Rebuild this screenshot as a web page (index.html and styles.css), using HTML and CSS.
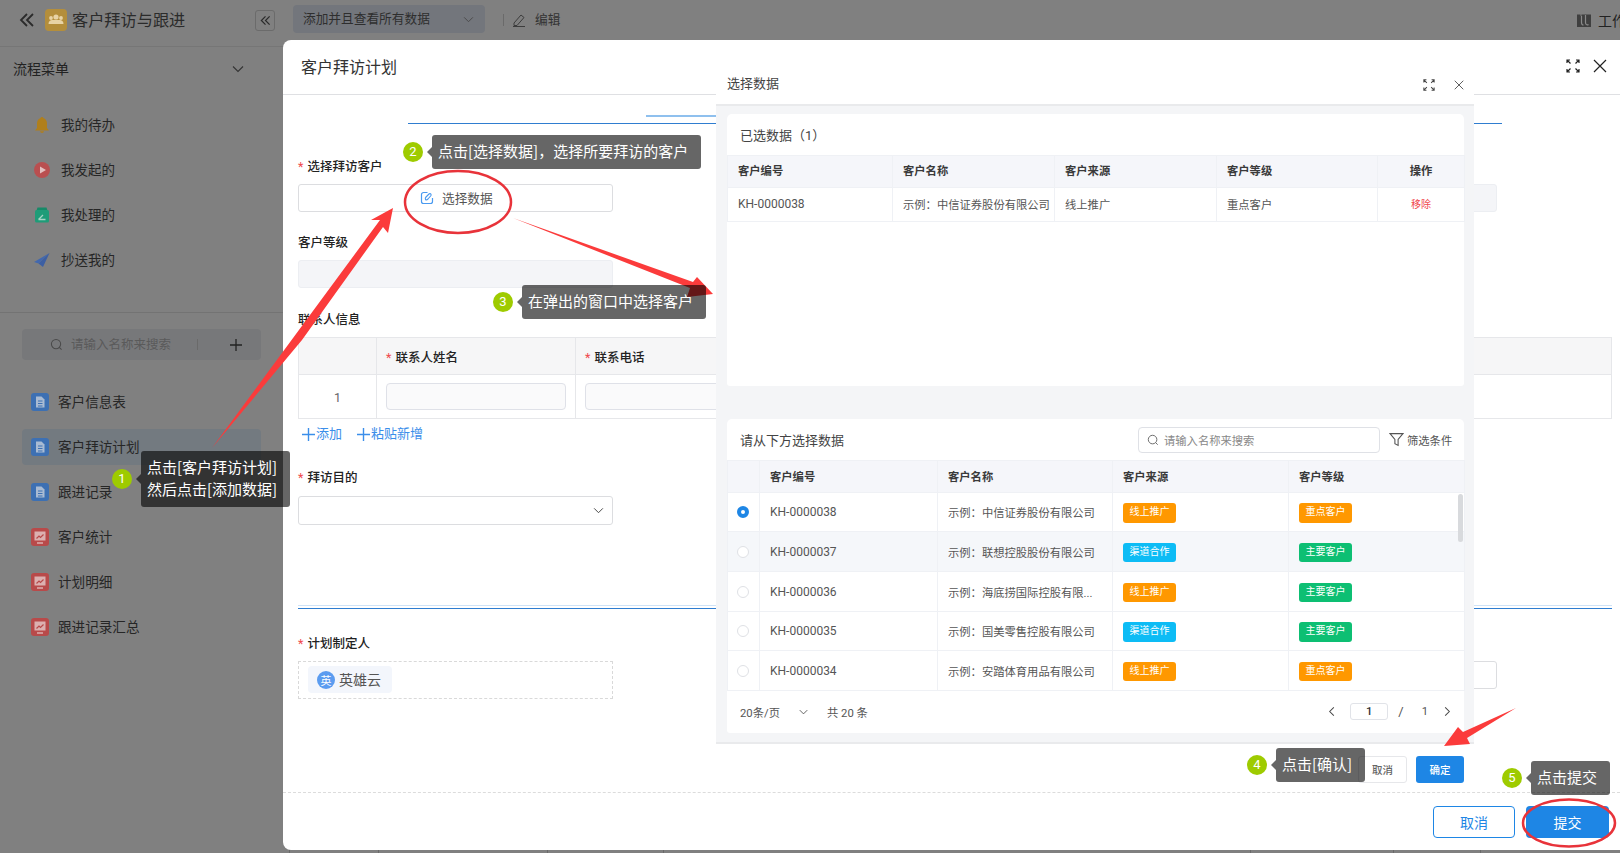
FILE: index.html
```html
<!DOCTYPE html>
<html lang="zh-CN">
<head>
<meta charset="utf-8">
<title>客户拜访计划</title>
<link rel="stylesheet" href="styles.css">
</head>
<body>
<svg class="defs" width="0" height="0" aria-hidden="true">
  <symbol id="i-doc" viewBox="0 0 18 18"><rect width="18" height="18" rx="3" fill="#3d70b3"/><path d="M5 3.500h5.500L13.500 6.500v8H5z" fill="#a9bbd3"/><path d="M7 8h4.500M7 10.500h4.500M7 13h4.500" stroke="#3d70b3" stroke-width="1"/></symbol>
  <symbol id="i-chart" viewBox="0 0 18 18"><rect width="18" height="18" rx="3" fill="#b84a4a"/><path d="M3.500 3.500h11v9h-11z" fill="#dcb0b0"/><path d="M6 15h6" stroke="#dcb0b0" stroke-width="1.500"/><path d="M5.500 10.500l2.500-2.500 1.500 1.500 3-3" fill="none" stroke="#b84a4a" stroke-width="1.200"/></symbol>
  <symbol id="i-expand" viewBox="0 0 14 14"><g fill="none" stroke="currentColor" stroke-width="1.200"><path d="M1 4V1h3M1 1l3.500 3.500M10 1h3v3M13 1L9.500 4.500M1 10v3h3M1 13l3.500-3.500M10 13h3v-3M13 13L9.500 9.500"/></g></symbol>
  <symbol id="i-close" viewBox="0 0 14 14"><path d="M1 1l12 12M13 1L1 13" fill="none" stroke="currentColor" stroke-width="1.200"/></symbol>
  <symbol id="i-down" viewBox="0 0 12 8"><path d="M1 1.500l5 5 5-5" fill="none" stroke="currentColor" stroke-width="1.100"/></symbol>
  <symbol id="i-search" viewBox="0 0 14 14"><circle cx="6.500" cy="6.500" r="5" fill="none" stroke="currentColor" stroke-width="1.100"/><path d="M10 10l2.500 2.500" stroke="currentColor" stroke-width="1.100"/></symbol>
  <symbol id="i-dbl" viewBox="0 0 16 16"><path d="M8 2L2 8l6 6M14 2L8 8l6 6" fill="none" stroke="currentColor" stroke-width="1.800"/></symbol>
  <symbol id="i-plus" viewBox="0 0 14 14"><path d="M7 0v14M0 7h14" fill="none" stroke="currentColor" stroke-width="1.500"/></symbol>
</svg>

<div class="app">
  <header class="topbar">
    <div class="brand">
      <svg class="back"><use href="#i-dbl"/></svg>
      <span class="logo"><svg viewBox="0 0 22 22" width="22" height="22"><circle cx="11" cy="8" r="2.600" fill="#e8d3a5"/><circle cx="6" cy="9" r="1.900" fill="#e8d3a5"/><circle cx="16" cy="9" r="1.900" fill="#e8d3a5"/><path d="M3.500 15c0-3 2-4 3.500-4h8c1.500 0 3.500 1 3.500 4z" fill="#e8d3a5"/></svg></span>
      <span class="app-title">客户拜访与跟进</span>
      <span class="collapse"><svg><use href="#i-dbl"/></svg></span>
    </div>
    <div class="view-select"><span>添加并且查看所有数据</span><svg class="chev"><use href="#i-down"/></svg></div>
    <span class="bar-sep"></span>
    <svg class="pencil" viewBox="0 0 14 14"><path d="M2 10l7-8 3 2.500-7 8H2zM1 13.500h12" fill="none" stroke="#3c3c3c" stroke-width="1"/></svg>
    <span class="bar-edit">编辑</span>
    <div class="bar-right">
      <svg class="puzzle" viewBox="0 0 14 14"><path d="M0 1.500h3.500v1.500h1V1.500H14V14H0z" fill="#3f3f3f"/><path d="M4.500 3v6.500c0 2 1 2.500 2 2.500M8.500 2v7.500c0 2 1.500 3 3 2" fill="none" stroke="#8a8a8a" stroke-width="1.200"/></svg>
      <span>工作</span>
    </div>
  </header>

  <aside class="side">
    <div class="menu-head"><span>流程菜单</span><svg class="chev"><use href="#i-down"/></svg></div>
    <nav class="flow-nav">
      <div class="flow-item"><svg viewBox="0 0 16 16"><path d="M8 0c.7 0 1.200.4 1.300 1 2.300.6 3.700 2.700 3.700 5.300V11l2 2.500H1L3 11V6.300C3 3.700 4.400 1.600 6.700 1 6.800.4 7.300 0 8 0z" fill="#b07f1c"/><path d="M6 14.300h4c-.2 1-1 1.700-2 1.700s-1.800-.7-2-1.700z" fill="#b07f1c"/></svg><span>我的待办</span></div>
      <div class="flow-item"><svg viewBox="0 0 16 16"><circle cx="8" cy="8" r="8" fill="#b94f50"/><path d="M6 4.500v7L12 8z" fill="#e3c0c0"/></svg><span>我发起的</span></div>
      <div class="flow-item"><svg viewBox="0 0 16 16"><path d="M3.500 0.500h9l1 3h-11z" fill="#178a68"/><rect x="1" y="3" width="14" height="12.500" rx="1.500" fill="#1f9c78"/><path d="M4.500 12.500L9 8M4.500 12.500h7" fill="none" stroke="#a8d4c6" stroke-width="1.300"/></svg><span>我处理的</span></div>
      <div class="flow-item"><svg viewBox="0 0 16 16"><path d="M15.500 1L0 10l4.500 1.500z" fill="#4268ae"/><path d="M15.500 1L4.500 11.500 9 15z" fill="#3c5fa3"/></svg><span>抄送我的</span></div>
    </nav>
    <div class="side-rule"></div>
    <div class="side-search">
      <svg class="s-ic"><use href="#i-search"/></svg>
      <span class="s-ph">请输入名称来搜索</span>
      <span class="s-sep"></span>
      <svg class="s-plus"><use href="#i-plus"/></svg>
    </div>
    <ul class="form-list">
      <li><svg><use href="#i-doc"/></svg><span>客户信息表</span></li>
      <li class="on"><svg><use href="#i-doc"/></svg><span>客户拜访计划</span></li>
      <li><svg><use href="#i-doc"/></svg><span>跟进记录</span></li>
      <li><svg><use href="#i-chart"/></svg><span>客户统计</span></li>
      <li><svg><use href="#i-chart"/></svg><span>计划明细</span></li>
      <li><svg><use href="#i-chart"/></svg><span>跟进记录汇总</span></li>
    </ul>
  </aside>

  <div class="peek"><i></i><i></i><i></i><i></i><i></i><i></i><i></i></div>

  <section class="modal">
    <div class="modal-head">
      <h2>客户拜访计划</h2>
      <svg class="m-exp"><use href="#i-expand"/></svg>
      <svg class="m-close"><use href="#i-close"/></svg>
    </div>
    <div class="modal-body">
      <div class="tab-line"><span class="tab-ink"></span></div>
      <div class="two-col first">
        <div class="field">
          <label><b>*</b>选择拜访客户</label>
          <div class="pick"><svg viewBox="0 0 14 14"><path d="M7.500 1.500H3.500a2 2 0 0 0-2 2v7a2 2 0 0 0 2 2h7a2 2 0 0 0 2-2V7" fill="none" stroke="#4a9af0" stroke-width="1.200"/><path d="M5.500 8.500c-.5-1 0-2 .5-2.500l3-3c1-1 2.500 0 2 1.500L8 8c-1 1-2 1-2.500.5z" fill="none" stroke="#4a9af0" stroke-width="1.100"/></svg><span>选择数据</span></div>
        </div>
        <div class="field"><label></label><div class="ctl disabled"></div></div>
      </div>
      <div class="field second">
        <label>客户等级</label>
        <div class="ctl disabled half"></div>
      </div>
      <div class="sub-title">联系人信息</div>
      <table class="contacts">
        <colgroup><col class="c-no"><col class="c-name"><col class="c-phone"></colgroup>
        <thead><tr><th></th><th><b>*</b>联系人姓名</th><th><b>*</b>联系电话</th></tr></thead>
        <tbody><tr><td class="no">1</td><td><span class="cell-in"></span></td><td><span class="cell-in short"></span></td></tr></tbody>
      </table>
      <div class="adders">
        <span><svg><use href="#i-plus"/></svg>添加</span>
        <span><svg><use href="#i-plus"/></svg>粘贴新增</span>
      </div>
      <div class="field third">
        <label><b>*</b>拜访目的</label>
        <div class="ctl half sel"><svg class="chev"><use href="#i-down"/></svg></div>
      </div>
      <div class="rule-blue"></div>
      <div class="two-col fourth">
        <div class="field">
          <label><b>*</b>计划制定人</label>
          <div class="members"><span class="chip"><i>英</i><span>英雄云</span></span></div>
        </div>
        <div class="field"><label></label><div class="ctl"></div></div>
      </div>
    </div>
    <div class="modal-foot">
      <button class="btn ghost">取消</button>
      <button class="btn solid">提交</button>
    </div>
  </section>

  <section class="inner">
    <div class="inner-head">
      <h3>选择数据</h3>
      <svg class="i-exp"><use href="#i-expand"/></svg>
      <svg class="i-close"><use href="#i-close"/></svg>
    </div>
    <div class="inner-body">
      <div class="card selected">
        <div class="card-head"><span>已选数据（1）</span></div>
        <table class="grid">
          <colgroup><col class="a1"><col class="a2"><col class="a3"><col class="a4"><col class="a5"></colgroup>
          <thead><tr><th>客户编号</th><th>客户名称</th><th>客户来源</th><th>客户等级</th><th class="mid">操作</th></tr></thead>
          <tbody><tr><td class="code">KH-0000038</td><td>示例：中信证券股份有限公司</td><td>线上推广</td><td>重点客户</td><td class="mid del">移除</td></tr></tbody>
        </table>
      </div>
      <div class="card picker">
        <div class="card-head">
          <span>请从下方选择数据</span>
          <div class="search"><svg><use href="#i-search"/></svg><span>请输入名称来搜索</span></div>
          <div class="filter"><svg viewBox="0 0 14 14"><path d="M1 1.500h12L8.500 7v5.500l-3-1.500V7z" fill="none" stroke="#555" stroke-width="1"/></svg><span>筛选条件</span></div>
        </div>
        <div class="grid-wrap">
          <table class="grid rows">
            <colgroup><col class="b0"><col class="b1"><col class="b2"><col class="b3"><col class="b4"></colgroup>
            <thead><tr><th></th><th>客户编号</th><th>客户名称</th><th>客户来源</th><th>客户等级</th></tr></thead>
            <tbody>
              <tr><td><span class="radio on"></span></td><td class="code">KH-0000038</td><td>示例：中信证券股份有限公司</td><td><span class="tag orange">线上推广</span></td><td><span class="tag orange">重点客户</span></td></tr>
              <tr class="hover"><td><span class="radio"></span></td><td class="code">KH-0000037</td><td>示例：联想控股股份有限公司</td><td><span class="tag cyan">渠道合作</span></td><td><span class="tag green">主要客户</span></td></tr>
              <tr><td><span class="radio"></span></td><td class="code">KH-0000036</td><td>示例：海底捞国际控股有限...</td><td><span class="tag orange">线上推广</span></td><td><span class="tag green">主要客户</span></td></tr>
              <tr><td><span class="radio"></span></td><td class="code">KH-0000035</td><td>示例：国美零售控股有限公司</td><td><span class="tag cyan">渠道合作</span></td><td><span class="tag green">主要客户</span></td></tr>
              <tr><td><span class="radio"></span></td><td class="code">KH-0000034</td><td>示例：安踏体育用品有限公司</td><td><span class="tag orange">线上推广</span></td><td><span class="tag orange">重点客户</span></td></tr>
            </tbody>
          </table>
          <span class="thumb"></span>
        </div>
        <div class="pager">
          <span class="p-size">20条/页</span>
          <svg class="chev"><use href="#i-down"/></svg>
          <span class="p-total">共 20 条</span>
          <svg class="p-arrow" viewBox="0 0 8 12"><path d="M6 1.500L1.500 6 6 10.500" fill="none" stroke="#444" stroke-width="1.100"/></svg>
          <span class="p-input">1</span>
          <span class="p-slash">/</span>
          <span class="p-pages">1</span>
          <svg class="p-arrow next" viewBox="0 0 8 12"><path d="M2 1.500L6.500 6 2 10.500" fill="none" stroke="#444" stroke-width="1.100"/></svg>
        </div>
      </div>
    </div>
    <div class="inner-foot">
      <button class="mini plain">取消</button>
      <button class="mini primary">确定</button>
    </div>
  </section>

  <svg class="marks" viewBox="0 0 1620 853" aria-hidden="true">
    <polygon points="212,448 380,220 371,220 393,208 388,233 383,227 302,340" fill="#fb3b3b"/>
    <polygon points="513,218 693,282 697,277 713,294 687,297 690,288" fill="#fb3b3b"/>
    <polygon points="1516,708 1463,732 1458,727 1444,746 1470,744 1467,738" fill="#fb3b3b"/>
    <ellipse cx="458" cy="202" rx="53" ry="31" fill="none" stroke="#e8333a" stroke-width="2.500"/>
    <ellipse cx="1569" cy="823" rx="46" ry="23.500" fill="none" stroke="#e8333a" stroke-width="2.500"/>
  </svg>

  <div class="note n1"><i>1</i><p>点击[客户拜访计划]<br>然后点击[添加数据]</p></div>
  <div class="note n2"><i>2</i><p>点击[选择数据]，选择所要拜访的客户</p></div>
  <div class="note n3"><i>3</i><p>在弹出的窗口中选择客户</p></div>
  <div class="note n4"><i>4</i><p>点击[确认]</p></div>
  <div class="note n5"><i>5</i><p>点击提交</p></div>
</div>
</body>
</html>
```

FILE: styles.css
```css
* { box-sizing: border-box; }
html, body { margin: 0; padding: 0; }
body { font-family: Roboto, "Noto Sans CJK SC", sans-serif; color: #222; }
.defs { position: absolute; }
.app { position: relative; width: 1620px; height: 853px; overflow: hidden; background: #808080; }
svg { display: block; flex: none; }

/* top bar */
.topbar { display: flex; align-items: center; height: 47px; padding-bottom: 6px; border-bottom: 1px solid #767676; }
.brand { display: flex; align-items: center; width: 275px; padding-left: 19px; flex: none; }
.back { width: 16px; height: 16px; color: #2b2b2b; }
.logo { width: 22px; height: 22px; margin-left: 10px; border-radius: 4px; background: #b48e3b; }
.app-title { margin: 0 0 2px 5px; font-size: 16.200px; color: #2b2b2b; white-space: nowrap; }
.collapse { display: flex; align-items: center; justify-content: center; margin-left: auto; width: 20px; height: 21px; border: 1px solid #6b6b6b; border-radius: 3px; color: #2b2b2b; }
.collapse svg { width: 11px; height: 11px; }
.view-select { display: flex; align-items: center; justify-content: space-between; width: 192px; height: 28px; margin: -2px 0 0 18px; padding: 0 11px 0 10px; border-radius: 4px; background: #73767c; font-size: 12.700px; color: #2e2e2e; }
.view-select span { margin-bottom: 4px; }
.view-select .chev { width: 11px; height: 7px; color: #4a4a4a; }
.bar-sep { width: 1px; height: 12px; margin-left: 18px; background: #6a6a6a; }
.pencil { width: 14px; height: 14px; margin-left: 8px; }
.bar-edit { margin: 0 0 4px 9px; font-size: 12.700px; color: #333; }
.bar-right { display: flex; align-items: center; gap: 7px; margin-left: auto; width: 43px; overflow: hidden; white-space: nowrap; font-size: 14px; color: #222; }
.puzzle { width: 14px; height: 14px; }

/* sidebar */
.side { width: 283px; }
.menu-head { display: flex; align-items: center; justify-content: space-between; height: 44px; padding: 0 39px 0 13px; font-size: 14px; color: #222; }
.menu-head span { margin-bottom: 2px; }
.menu-head .chev { width: 12px; height: 8px; color: #333; }
.flow-nav { margin-top: 11px; }
.flow-item { display: flex; align-items: center; height: 45px; padding-left: 34px; font-size: 13.500px; color: #262626; }
.flow-item span { margin-bottom: 2px; }
.flow-item svg { width: 16px; height: 16px; margin-right: 11px; }
.side-rule { height: 1px; margin-top: 30px; background: #737373; }
.side-search { display: flex; align-items: center; height: 31px; margin: 16px 22px 0; padding-left: 28px; border-radius: 4px; background: #77787a; color: #5a5a5a; }
.s-ic { width: 13px; height: 13px; color: #4a4a4a; }
.s-ph { margin: 0 0 2px 8px; font-size: 12.500px; }
.s-sep { width: 1px; height: 11px; margin-left: 26px; background: #6a6a6a; }
.s-plus { width: 12px; height: 12px; margin-left: 32px; color: #222; }
.form-list { display: flex; flex-direction: column; gap: 9px; margin: 24px 22px 0; padding: 0; list-style: none; }
.form-list li { display: flex; align-items: center; height: 36px; padding-left: 9px; border-radius: 4px; font-size: 13.600px; color: #262626; }
.form-list li span { margin-bottom: 2px; }
.form-list li.on { background: #737a80; }
.form-list svg { width: 18px; height: 18px; margin-right: 9px; }

.peek { position: absolute; left: 289px; bottom: 0; height: 3px; display: grid; grid-template-columns: 89px 169px 116px 587px 143px 87px 131px; }
.peek i { border-left: 1px solid #6a6a6a; }

/* outer modal */
.modal { position: absolute; left: 283px; top: 40px; width: 1337px; height: 810px; display: flex; flex-direction: column; background: #fff; border-radius: 8px 0 0 8px; }
.modal-head { display: flex; align-items: center; height: 55px; padding: 0 13px 0 18px; border-bottom: 1px solid #dfe0e3; }
.modal-head h2 { margin: 0 0 2px; font-size: 16px; font-weight: 400; color: #333; }
.m-exp { width: 14px; height: 14px; margin: 0 0 2px auto; color: #222; }
.m-close { width: 14px; height: 14px; margin: 0 0 2px 13px; color: #222; }
.modal-body { flex: 1; padding: 0 8px 0 15px; }
.tab-line { height: 29px; margin: 0 110px 0 110px; border-bottom: 1px solid #2f7dd0; }
.tab-ink { display: block; width: 90px; height: 2px; margin-left: 238px; position: relative; top: 20px; background: #8fc0ee; }
.two-col { display: grid; grid-template-columns: 315px 298px; justify-content: space-between; width: 1199px; }
.first { margin-top: 34px; }
.field label { display: block; height: 18px; margin-bottom: 8px; font-size: 12.500px; line-height: 18px; font-weight: 500; color: #222; }
b { margin-right: 4px; font-weight: 400; color: #f0484d; }
.ctl { height: 28px; border: 1px solid #dcdde0; border-radius: 3px; background: #fff; }
.half { width: 315px; }
.disabled { background: #f4f5f8; border-color: #eceef2; }
.pick { display: flex; align-items: center; height: 28px; padding-left: 121px; border: 1px solid #dcdde0; border-radius: 3px; font-size: 12.700px; color: #555; }
.pick span { margin-bottom: 2px; }
.pick svg { width: 14px; height: 14px; margin-right: 8px; }
.second { margin-top: 22px; }
.sub-title { margin-top: 23px; height: 18px; font-size: 12.500px; line-height: 18px; font-weight: 500; color: #222; }
.contacts { width: 1314px; margin-top: 8px; border-collapse: collapse; table-layout: fixed; font-size: 12.500px; }
.c-no { width: 78px; }
.c-name { width: 199px; }
.contacts th, .contacts td { padding: 0 9px; border: 1px solid #e6e7ea; text-align: left; font-weight: 500; color: #222; }
.contacts th { height: 37px; background: #f6f6f7; }
.contacts td { height: 44px; font-weight: 400; }
.contacts .no { padding: 2px 0 0; text-align: center; color: #666; }
.cell-in { display: block; height: 27px; border: 1px solid #dfe1e8; border-radius: 4px; background: #fafafb; }
.cell-in.short { width: 179px; }
.adders { display: flex; gap: 15px; margin-top: 6px; padding-left: 4px; height: 18px; line-height: 16px; font-size: 13px; color: #3b8eea; }
.adders span { display: flex; align-items: center; gap: 1px; }
.adders svg { width: 13px; height: 13px; }
.third { margin-top: 26px; }
.third label { margin-bottom: 9px; }
.sel { position: relative; display: flex; align-items: center; justify-content: flex-end; height: 29px; padding-right: 8px; }
.sel .chev { width: 11px; height: 7px; color: #444; }
.rule-blue { height: 4px; margin-top: 80px; border-top: 1px solid #cfe3f7; border-bottom: 1px solid #2f7dd0; }
.fourth { margin-top: 26px; }
.fourth label { margin-bottom: 8px; }
.members { height: 38px; padding: 4px 9px; border: 1px dashed #d9d9d9; }
.chip { display: inline-flex; align-items: center; width: 84px; height: 27px; padding-left: 9px; border-radius: 4px; background: #f3f6fc; font-size: 14px; color: #555; }
.chip span { margin-bottom: 2px; }
.chip i { display: flex; align-items: center; justify-content: center; width: 18px; height: 18px; margin-right: 4px; border-radius: 50%; background: #5b9cf0; color: #fff; font-style: normal; font-size: 11px; }
.modal-foot { display: flex; justify-content: flex-end; gap: 11px; height: 58px; padding: 13px 11px 0 0; border-top: 1px dashed #dcdcdc; }
.btn { height: 32px; border-radius: 4px; font: inherit; font-size: 14px; }
.ghost { width: 82px; border: 1px solid #1e86e5; background: #fff; color: #1e86e5; }
.solid { width: 83px; border: 0; background: #1e86e5; color: #fff; }

/* inner dialog */
.inner { position: absolute; left: 716px; top: 63px; width: 758px; height: 727px; display: flex; flex-direction: column; background: #fff; }
.inner-head { display: flex; align-items: center; height: 43px; padding: 0 10px 0 11px; border-bottom: 2px solid #e9eaec; }
.inner-head h3 { margin: 0 0 3px; font-size: 13px; font-weight: 400; color: #444; }
.i-exp { width: 12px; height: 12px; margin: 2px 0 0 auto; color: #444; }
.i-close { width: 10px; height: 10px; margin: 2px 0 0 19px; color: #444; }
.inner-body { display: flex; flex-direction: column; gap: 33px; height: 638px; padding: 8px 10px 9px 11px; border-bottom: 2px solid #e9eaec; background: #f4f5f7; }
.card { background: #fff; border-radius: 5px 5px 3px 3px; }
.selected { height: 272px; }
.picker { height: 314px; }
.card-head { display: flex; align-items: center; height: 41px; padding-left: 13px; font-size: 13px; color: #444; }
.search { display: flex; align-items: center; width: 242px; height: 26px; margin-left: auto; padding-left: 8px; border: 1px solid #dfe1e6; border-radius: 4px; font-size: 11.300px; color: #888; }
.search svg { width: 12px; height: 12px; margin-right: 5px; color: #666; }
.filter { display: flex; align-items: center; gap: 3px; width: 84px; padding-left: 9px; font-size: 11.300px; color: #555; }
.filter svg { width: 15px; height: 15px; }
.grid { width: 737px; border-collapse: collapse; table-layout: fixed; font-size: 11.300px; }
.grid th, .grid td { padding: 0 10px; border: 1px solid #eff1f5; text-align: left; white-space: nowrap; color: #555; overflow: hidden; }
.grid th { height: 32px; padding-bottom: 3px; background: #f5f6fa; font-weight: 700; color: #3a3a3a; }
.grid td { height: 34px; padding-bottom: 2px; }
.grid td.code { font-size: 12px; }
.grid .mid { text-align: center; padding-left: 0; padding-right: 0; }
.grid td.del { color: #f0484d; font-size: 10px; }
.a1 { width: 165px; } .a2 { width: 162px; } .a3 { width: 162px; } .a4 { width: 161px; } .a5 { width: 87px; }
.b0 { width: 32px; } .b1 { width: 178px; } .b2 { width: 175px; } .b3 { width: 176px; } .b4 { width: 176px; }
.rows th { padding-bottom: 1px; }
.rows td { height: 39px; padding-bottom: 0; }
.rows tr:nth-child(2) td, .rows tr:nth-child(3) td, .rows tr:nth-child(5) td { height: 40px; }
.rows .hover td { background: #f5f7fa; }
.rows td:first-child { padding: 0 0 0 9px; }
.grid-wrap { position: relative; height: 229px; }
.thumb { position: absolute; right: 1px; top: 34px; width: 5px; height: 48px; border-radius: 3px; background: #d8dadd; }
.radio { display: block; width: 12px; height: 12px; border: 1px solid #dfe1e5; border-radius: 50%; background: #fff; }
.radio.on { border: 4px solid #1e86e5; }
.tag { display: inline-block; width: 53px; height: 19.500px; margin-top: 2px; border-radius: 3px; font-size: 10px; line-height: 18px; text-align: center; color: #fff; vertical-align: middle; }
.orange { background: #ff9800; }
.cyan { background: #0dbcf5; }
.green { background: #0dbf73; }
.pager { display: flex; align-items: center; height: 44px; padding: 1px 13px 0; font-size: 11.300px; color: #555; }
.pager .chev { width: 9px; height: 6px; margin-left: 19px; color: #444; }
.p-total { margin-left: 19px; }
.p-arrow { width: 8px; height: 11px; margin-left: auto; }
.p-input { width: 38px; height: 17px; margin-left: 14px; border: 1px solid #e1e3e8; border-radius: 3px; text-align: center; line-height: 15px; font-weight: 500; color: #333; }
.p-slash { margin-left: 10px; font-size: 13px; }
.p-pages { margin-left: 18px; }
.p-arrow.next { margin-left: 15px; }
.inner-foot { display: flex; justify-content: flex-end; gap: 9px; padding: 12px 10px 0 0; }
.mini { height: 27px; width: 49px; border-radius: 3px; font: inherit; font-size: 10.500px; font-weight: 500; }
.plain { border: 1px solid #e6e7ea; background: #fff; color: #666; }
.primary { width: 48px; border: 0; background: #1e86e5; color: #fff; }

/* annotations */
.marks { position: absolute; left: 0; top: 0; width: 1620px; height: 853px; }
.note { position: absolute; display: flex; align-items: center; }
.note i { width: 20px; height: 20px; margin-right: 9px; border-radius: 50%; background: #9ecb00; color: #fff; font-style: normal; font-size: 13px; line-height: 20px; text-align: center; }
.note p { position: relative; margin: 0; padding: 5px 13px 7px 6px; border-radius: 3px; background: rgba(0, 0, 0, .6); color: #fff; font-family: "Noto Sans CJK SC", sans-serif; font-size: 15px; line-height: 22px; white-space: nowrap; }
.note p::before { content: ""; position: absolute; left: -5px; top: 50%; margin-top: -5px; border: 5px solid transparent; border-left: 0; border-right-color: rgba(0, 0, 0, .6); }
.n1 { left: 112px; top: 451px; }
.n2 { left: 403px; top: 135px; }
.n3 { left: 493px; top: 285px; }
.n4 { left: 1247px; top: 748px; }
.n5 { left: 1502px; top: 761px; }
```
